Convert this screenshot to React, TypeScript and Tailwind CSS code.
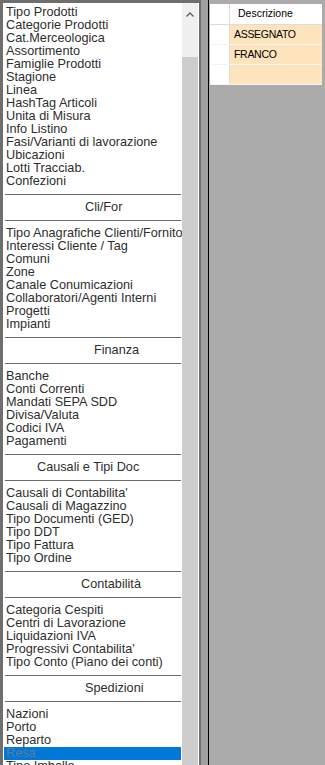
const sections: { title?: string; indent?: number; items: string[] }[] = [
  {
    items: [
      'Tipo Prodotti',
      'Categorie Prodotti',
      'Cat.Merceologica',
      'Assortimento',
      'Famiglie Prodotti',
      'Stagione',
      'Linea',
      'HashTag Articoli',
      'Unita di Misura',
      'Info Listino',
      'Fasi/Varianti di lavorazione',
      'Ubicazioni',
      'Lotti Tracciab.',
      'Confezioni',
    ],
  },
  {
    title: 'Cli/For',
    indent: 81,
    items: [
      'Tipo Anagrafiche Clienti/Fornitori',
      'Interessi Cliente / Tag',
      'Comuni',
      'Zone',
      'Canale Conumicazioni',
      'Collaboratori/Agenti Interni',
      'Progetti',
      'Impianti',
    ],
  },
  {
    title: 'Finanza',
    indent: 90,
    items: ['Banche', 'Conti Correnti', 'Mandati SEPA SDD', 'Divisa/Valuta', 'Codici IVA', 'Pagamenti'],
  },
  {
    title: 'Causali e Tipi Doc',
    indent: 33,
    items: [
      "Causali di Contabilita'",
      'Causali di Magazzino',
      'Tipo Documenti (GED)',
      'Tipo DDT',
      'Tipo Fattura',
      'Tipo Ordine',
    ],
  },
  {
    title: 'Contabilità',
    indent: 77,
    items: [
      'Categoria Cespiti',
      'Centri di Lavorazione',
      'Liquidazioni IVA',
      "Progressivi Contabilita'",
      'Tipo Conto (Piano dei conti)',
    ],
  },
  {
    title: 'Spedizioni',
    indent: 81,
    items: ['Nazioni', 'Porto', 'Reparto', 'Resa', 'Tipo Imballo'],
  },
];

const rows = ['ASSEGNATO', 'FRANCO', ''];

function Divider() {
  return (
    <div className="flex h-[13px] items-center pl-[1px]">
      <div className="h-px w-full bg-[#6a6a6a]" />
    </div>
  );
}

function Item({ label, selected }: { label: string; selected?: boolean }) {
  return (
    <div
      className={
        selected
          ? 'h-[13px] whitespace-nowrap bg-[#0078d7] pl-[2px] leading-[13px] text-[#5d7b9b]'
          : 'h-[13px] whitespace-nowrap pl-[2px] leading-[13px]'
      }
    >
      {label}
    </div>
  );
}

export default function App() {
  return (
    <div className="flex h-[765px] w-[325px] overflow-hidden bg-[#ababab] font-['Liberation_Sans',Arial,sans-serif]">
      {/* list box */}
      <div className="flex w-[201px] shrink-0 border-l-[3px] border-r-[2px] border-t-[3px] border-[#6e6e6e] bg-white">
        <div className="w-[179px] shrink-0 overflow-hidden px-[1px] pt-[3px] text-[12.7px] text-[#2e2e2e]">
          {sections.map((s, i) => (
            <div key={i}>
              {s.title && (
                <>
                  <Divider />
                  <div className="h-[13px] whitespace-nowrap leading-[13px]" style={{ paddingLeft: s.indent }}>
                    {s.title}
                  </div>
                  <Divider />
                </>
              )}
              {s.items.map((it) => (
                <Item key={it} label={it} selected={it === 'Resa'} />
              ))}
            </div>
          ))}
        </div>
        {/* scrollbar */}
        <div className="flex w-[16px] shrink-0 flex-col bg-[#f0f0f0]">
          <div className="flex h-[54px] justify-center pt-[9px]">
            <svg width="8" height="5" viewBox="0 0 8 5">
              <polyline points="0.5,4.5 4,1 7.5,4.5" fill="none" stroke="#606060" strokeWidth="1.4" />
            </svg>
          </div>
          <div className="flex-1 bg-[#cdcdcd]" />
        </div>
        <div className="w-px shrink-0 bg-white" />
      </div>

      {/* splitter */}
      <div className="w-[7px] shrink-0 bg-[#a0a0a0]" />

      {/* grid panel */}
      <div className="flex-1 border-l border-black pl-px pt-[4px]">
        <div className="w-[112px] bg-white text-[10.5px] text-black">
          <div className="flex h-[21px] border-b border-[#dcdcdc]">
            <div className="w-[20px] shrink-0 border-r border-[#dcdcdc]" />
            <div className="flex flex-1 items-center pl-[8px]">Descrizione</div>
          </div>
          {rows.map((r, i) => (
            <div key={i} className="flex h-[20px] border-b border-[#f4f4f4]">
              <div className="w-[20px] shrink-0 border-r border-[#dcdcdc] bg-white" />
              <div className="flex flex-1 items-center bg-[#fde4bc] pl-[4px] tracking-[-0.3px]">{r}</div>
            </div>
          ))}
        </div>
      </div>
    </div>
  );
}
